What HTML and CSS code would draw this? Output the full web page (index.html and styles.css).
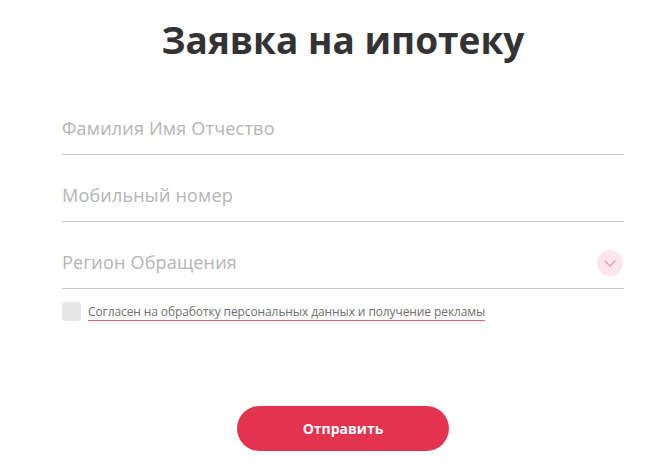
FILE: index.html
```html
<!DOCTYPE html>
<html lang="ru">
<head>
<meta charset="utf-8">
<title>Заявка на ипотеку</title>
<link rel="stylesheet" href="styles.css">
</head>
<body>
<main class="form">
  <h1 class="title">Заявка на ипотеку</h1>
  <div class="field"><span class="placeholder">Фамилия Имя Отчество</span></div>
  <div class="field"><span class="placeholder">Мобильный номер</span></div>
  <div class="field field-select">
    <span class="placeholder">Регион Обращения</span>
    <span class="chevron">
      <svg width="12" height="7" viewBox="0 0 12 7"><path d="M1 1l5 5 5-5" fill="none" stroke="#d9a0ae" stroke-width="1.4" stroke-linecap="round" stroke-linejoin="round"/></svg>
    </span>
  </div>
  <label class="agree">
    <span class="box"></span>
    <span class="agree-text">Согласен на обработку персональных данных и получение рекламы</span>
  </label>
  <div class="actions">
    <button class="submit" type="button">Отправить</button>
  </div>
</main>
</body>
</html>
```
FILE: styles.css
```css
* { box-sizing: border-box; }
html, body { margin: 0; padding: 0; background: #fff; }
body { font-family: "Open Sans", "Noto Sans", sans-serif; }
.form {
  width: 562px;
  margin-left: 62px;
  padding-top: 18px;
}
.title {
  margin: 0 0 26px;
  font-size: 37px;
  line-height: 44px;
  font-weight: 700;
  color: #333;
  text-align: center;
}
.field {
  display: flex;
  align-items: center;
  justify-content: space-between;
  padding: 28px 0 14px;
  border-bottom: 1px solid #c9c9c9;
}
.placeholder {
  font-size: 18px;
  line-height: 24px;
  letter-spacing: 0.2px;
  color: #b4b4b4;
}
.chevron {
  width: 26px;
  height: 26px;
  border-radius: 50%;
  background: #fde6eb;
  display: flex;
  align-items: center;
  justify-content: center;
  margin-right: 1px;
  margin-bottom: -2px;
}
.agree {
  display: flex;
  align-items: center;
  gap: 7px;
  margin-top: 13px;
}
.box {
  width: 19px;
  height: 19px;
  border-radius: 4px;
  background: #e6e6e6;
  flex: none;
}
.agree-text {
  display: inline-block;
  font-size: 12px;
  line-height: 16px;
  padding-top: 1px;
  letter-spacing: -0.1px;
  color: #707070;
  border-bottom: 1px solid #e2617b;
}
.actions {
  display: flex;
  justify-content: center;
  margin-top: 85px;
}
.submit {
  width: 212px;
  height: 45px;
  border: 0;
  border-radius: 23px;
  background: #e3344f;
  color: #fff;
  font-family: "Open Sans", "Noto Sans", sans-serif;
  font-size: 14px;
  font-weight: 700;
}
```
